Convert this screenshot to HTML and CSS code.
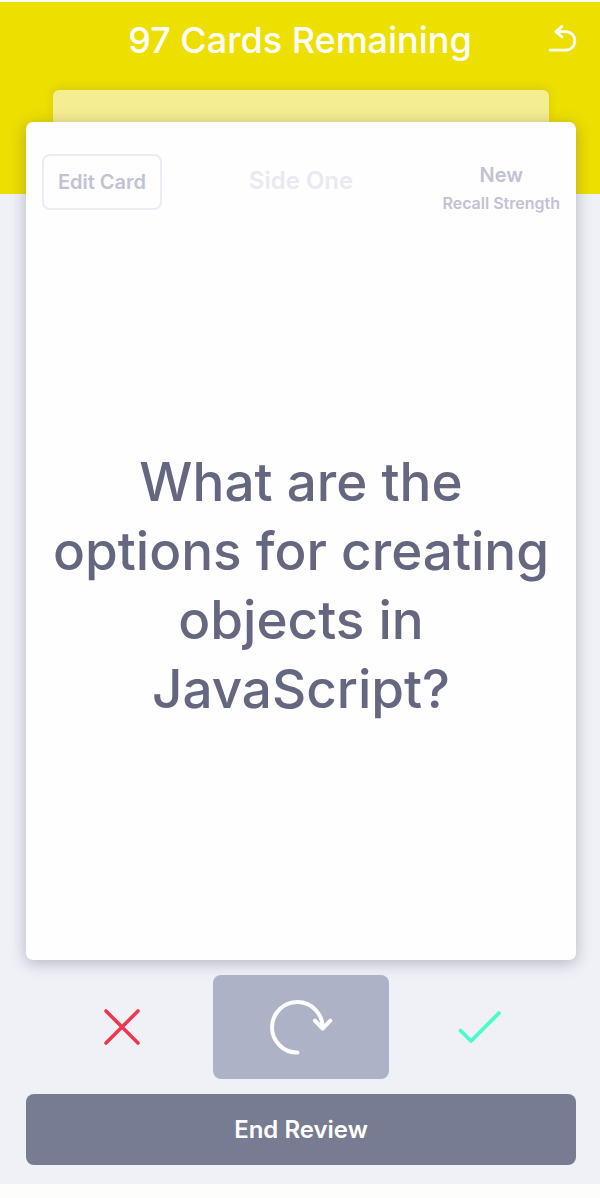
FILE: index.html
```html
<!DOCTYPE html>
<html lang="en">
<head>
<meta charset="utf-8">
<meta name="viewport" content="width=device-width, initial-scale=1">
<title>Card Review</title>
<link rel="stylesheet" href="styles.css">
</head>
<body>
<div class="app">
  <header class="header">
    <h1 class="title">97 Cards Remaining</h1>
    <button class="icon-button undo" type="button" aria-label="Undo">
      <svg width="32" height="32" viewBox="0 0 32 32" fill="none" stroke="currentColor" stroke-width="2.8" stroke-linecap="round" stroke-linejoin="round">
        <path d="M15.800 2.600 9.800 7.600l6 5.200M10.200 7.600h9.300a9.300 9.300 0 0 1 0 18.600H4.200"/>
      </svg>
    </button>
  </header>
  <main class="review">
    <div class="deck">
      <div class="next-card"></div>
      <article class="card">
        <div class="card-top">
          <button class="edit" type="button">Edit Card</button>
          <span class="side">Side One</span>
          <div class="recall">
            <span class="recall-value">New</span>
            <span class="recall-label">Recall Strength</span>
          </div>
        </div>
        <p class="question">What are the options for creating objects in JavaScript?</p>
      </article>
    </div>
    <div class="answers">
      <button class="icon-button wrong" type="button" aria-label="Wrong">
        <svg width="40" height="40" viewBox="0 0 40 40" fill="none" stroke="currentColor" stroke-width="3.6" stroke-linecap="round">
          <path d="M4 4l32 32M36 4 4 36"/>
        </svg>
      </button>
      <button class="icon-button flip" type="button" aria-label="Flip card">
        <svg width="64" height="56" viewBox="0 0 64 56" fill="none" stroke="currentColor" stroke-width="4" stroke-linecap="round" stroke-linejoin="round">
          <path d="M28.500 53.600A25.300 25.300 0 1 1 53.600 29M45.900 21.700l7.700 8 7.700-8"/>
        </svg>
      </button>
      <button class="icon-button right" type="button" aria-label="Right">
        <svg width="44" height="34" viewBox="0 0 44 34" fill="none" stroke="currentColor" stroke-width="3.800" stroke-linecap="round" stroke-linejoin="round">
          <path d="M2.500 20.500 13 31 41 3"/>
        </svg>
      </button>
    </div>
    <button class="end" type="button">End Review</button>
  </main>
</div>
</body>
</html>
```

FILE: styles.css
```css
* {
  box-sizing: border-box;
}

body {
  margin: 0;
  background: #fdfdfb;
  font-family: Inter, "Liberation Sans", sans-serif;
}

button {
  font-family: inherit;
  cursor: pointer;
}

.app {
  display: flex;
  flex-direction: column;
  min-height: 100vh;
  border-top: 2px solid #fffff8;
  border-bottom: 14px solid #fdfdfb;
  background: #f0f1f7;
}

.header {
  display: grid;
  grid-template-columns: 32px 1fr 32px;
  align-items: center;
  padding: 16px 22px 132px;
  background: #eddf00;
  color: #fff;
}

.title {
  grid-column: 2;
  margin: 0;
  font-size: 36px;
  font-weight: 500;
  line-height: 44px;
  text-align: center;
}

.icon-button {
  display: flex;
  align-items: center;
  justify-content: center;
  padding: 0;
  border: 0;
  background: none;
  color: inherit;
}

.icon-button svg {
  display: block;
}

.review {
  flex: 1;
  display: flex;
  flex-direction: column;
  margin-top: -104px;
  padding: 0 24px 19px 26px;
}

.deck {
  flex: 1;
  display: flex;
  flex-direction: column;
}

.next-card {
  height: 32px;
  margin: 0 27px;
  border-radius: 6px 6px 0 0;
  background: #f4ed91;
  box-shadow: 0 -2px 8px rgba(130, 120, 80, 0.2);
}

.card {
  flex: 1;
  display: flex;
  flex-direction: column;
  padding: 32px 16px 0;
  border-radius: 7px;
  background: #fefefe;
  box-shadow: 0 3px 15px rgba(70, 70, 90, 0.36);
}

.card-top {
  display: grid;
  grid-template-columns: 1fr auto 1fr;
  align-items: start;
}

.edit {
  justify-self: start;
  width: 120px;
  height: 56px;
  padding: 0;
  border: 2px solid #ebebf4;
  border-radius: 8px;
  background: none;
  color: #c1c2d4;
  font-size: 20px;
  font-weight: 600;
}

.side {
  color: #e9e9f2;
  font-size: 24px;
  font-weight: 600;
  line-height: 54px;
}

.recall {
  justify-self: end;
  display: flex;
  flex-direction: column;
  align-items: center;
  gap: 4px;
  padding-top: 5px;
  color: #c1c2d4;
  font-weight: 600;
}

.recall-value {
  font-size: 20px;
  line-height: 32px;
}

.recall-label {
  font-size: 16px;
  line-height: 16px;
}

.question {
  flex: 1;
  display: flex;
  align-items: center;
  justify-content: center;
  margin: 0;
  color: #64677f;
  font-size: 53px;
  font-weight: 500;
  line-height: 69px;
  text-align: center;
}

.answers {
  display: grid;
  grid-template-columns: 1fr 176px 1fr;
  margin: 15px 5px;
}

.answers .icon-button {
  height: 104px;
  border-radius: 8px;
}

.wrong {
  color: #ec394f;
}

.answers .flip {
  background: #aeb2c6;
  color: #fdfdff;
}

.right {
  color: #47fdc8;
}

.end {
  height: 71px;
  border: 0;
  border-radius: 8px;
  background: #787c92;
  color: #fff;
  font-size: 24px;
  font-weight: 600;
}
```
